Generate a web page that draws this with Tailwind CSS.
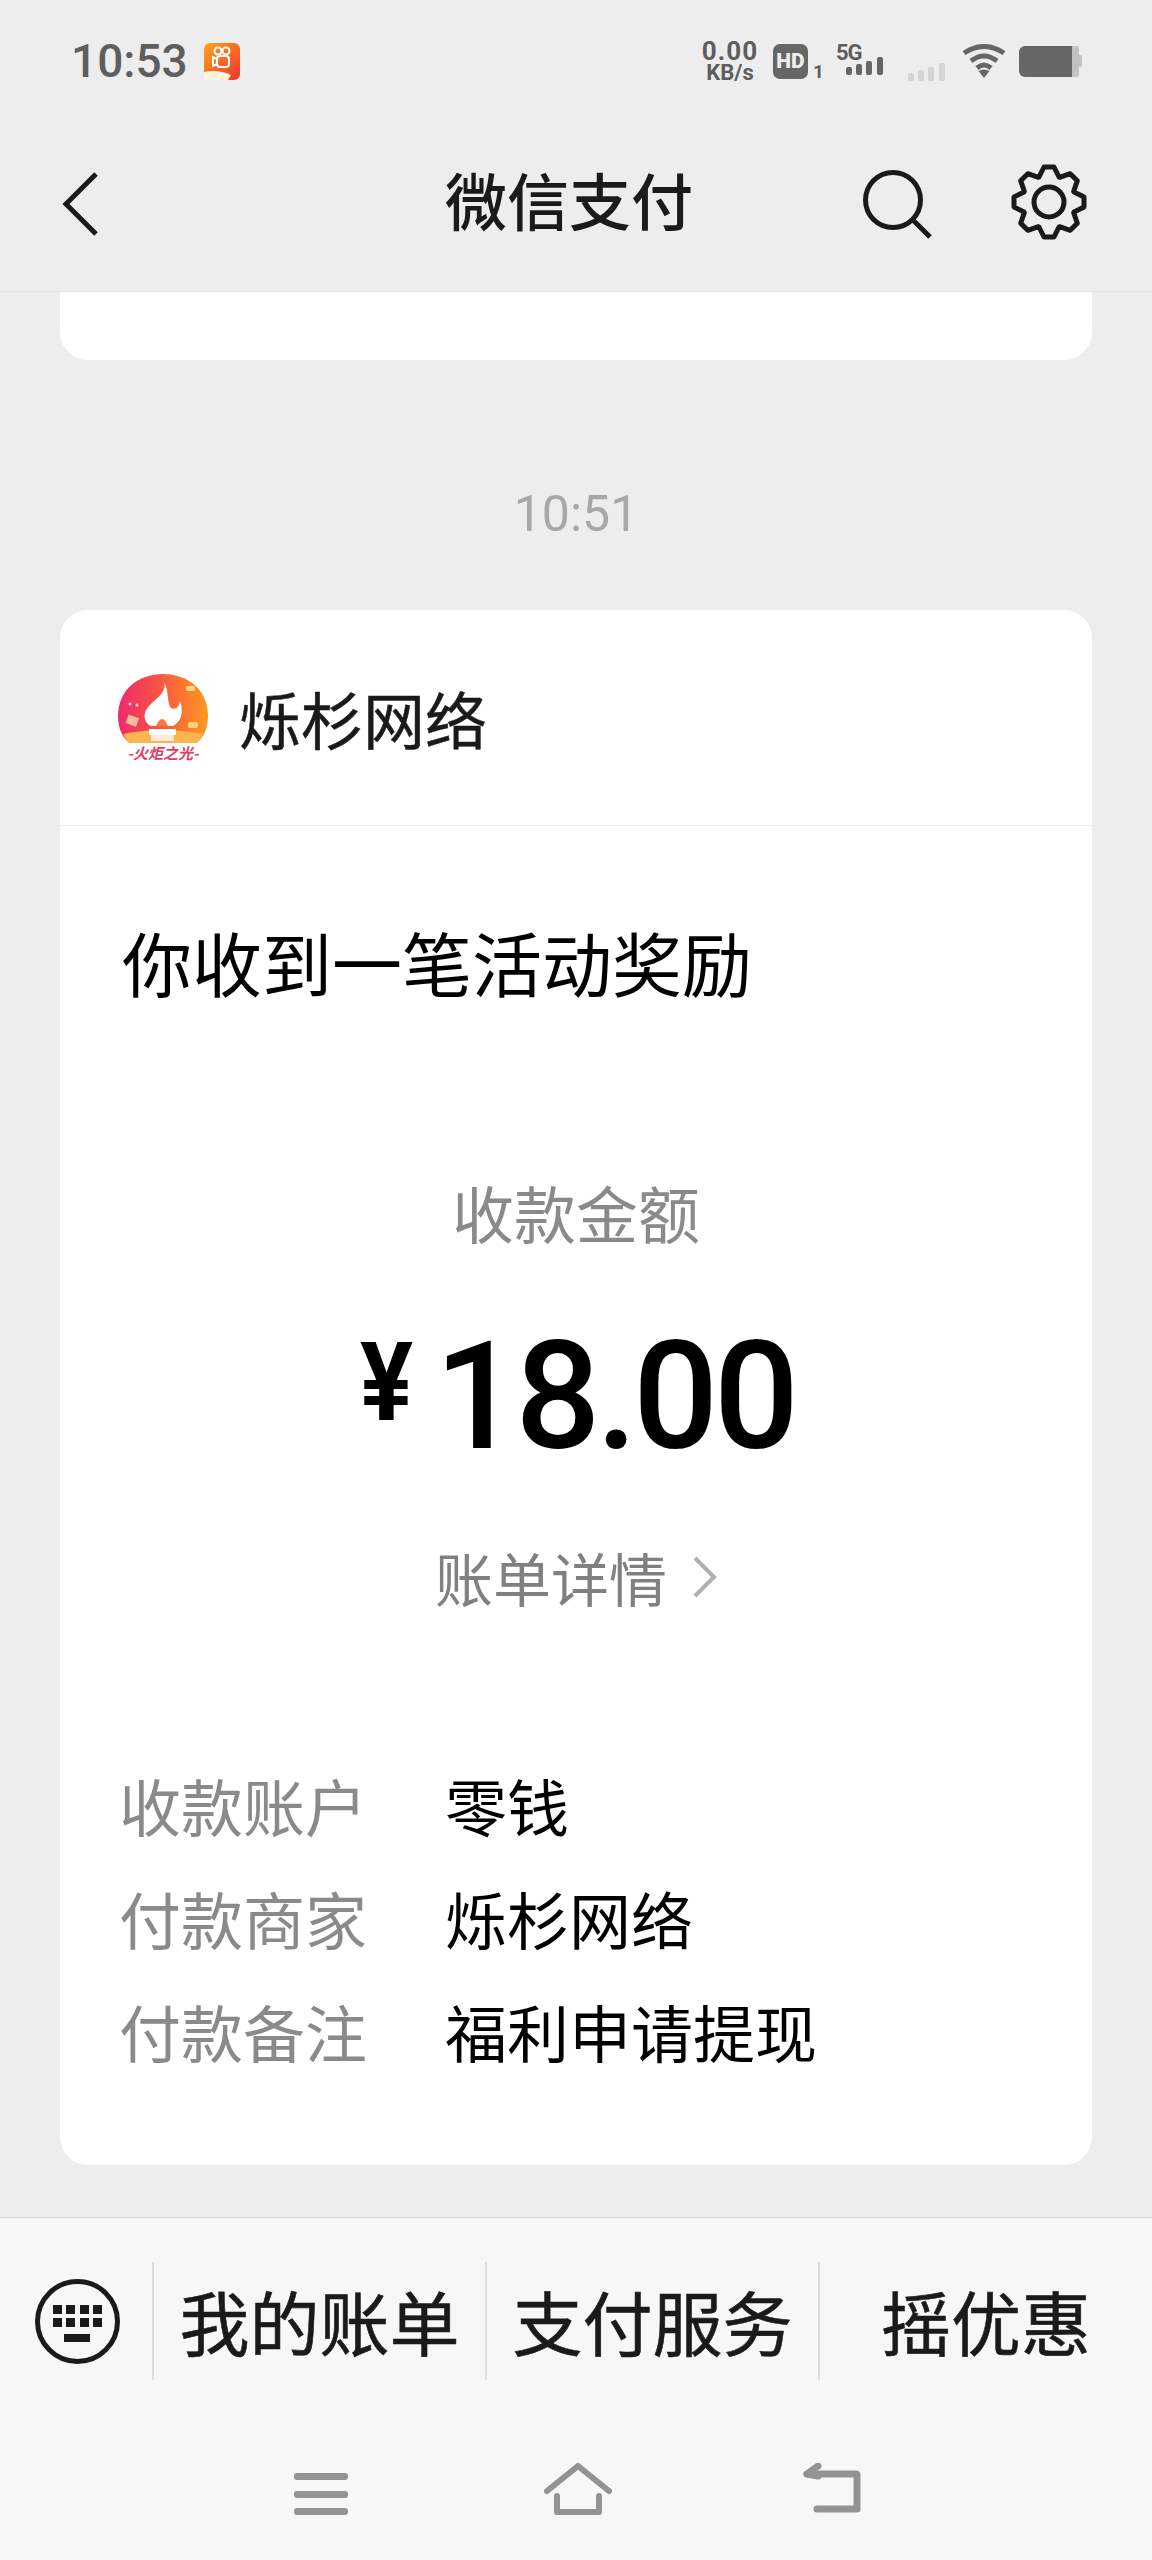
<!DOCTYPE html>
<html lang="zh-CN">
<head>
    <meta charset="UTF-8">
    <meta name="viewport" content="width=device-width, initial-scale=1.0">
    <script src="https://cdn.jsdelivr.net/npm/@tailwindcss/browser@4"></script>
    <title>微信支付</title>
</head>
<body class="bg-[#ededed] font-['Noto_Sans_CJK_SC',sans-serif] text-[#1a1a1a]">
<div class="w-[1152px] h-[2560px] flex flex-col overflow-hidden">

    <!-- status bar + nav -->
    <header class="h-[292px] shrink-0 border-b border-[#e6e6e6]">
        <div class="h-[122px] flex items-center pl-[71px] pr-[70px] text-[#5e5e5e] font-['Roboto',sans-serif]">
            <span class="text-[46px] leading-none font-medium">10:53</span>
            <svg class="ml-[16px]" width="36" height="37" viewBox="0 0 36 37">
                <defs><linearGradient id="ks" x1="0" y1="0" x2="1" y2="1"><stop offset="0" stop-color="#ffa51f"/><stop offset="1" stop-color="#f0322b"/></linearGradient></defs>
                <rect width="36" height="37" rx="6" fill="url(#ks)"/>
                <path d="M0 29 Q14 26 27 32 L24 37 L5 37 Q0 37 0 33Z" fill="#fff3dc"/>
                <g fill="none" stroke="#fff" stroke-width="2">
                    <circle cx="14" cy="8" r="3.500"/><circle cx="22" cy="8" r="3.500"/>
                    <rect x="13" y="13" width="12" height="11" rx="3"/><path d="M13 16 L9 14 V23 L13 21"/>
                </g>
            </svg>
            <div class="ml-auto flex flex-col items-center font-bold w-[58px]">
                <span class="text-[26px] leading-[24px] tracking-[1px]">0.00</span>
                <span class="text-[22px] leading-[20px]">KB/s</span>
            </div>
            <div class="ml-[14px] w-[35px] h-[35px] rounded-[7px] bg-[#666] text-[#ededed] text-[21px] leading-[35px] text-center font-black">HD</div>
            <span class="ml-[5px] mt-[20px] w-[8px] text-[19px] leading-none font-bold">1</span>
            <div class="ml-[15px] w-[48px] h-[36px] relative">
                <span class="absolute left-0 top-0 text-[22px] leading-[20px] font-bold tracking-[-1px]">5G</span>
                <svg class="absolute left-[10px] top-[14px]" width="38" height="18" viewBox="0 0 38 18" fill="#666"><rect x="0" y="10" width="6" height="8" rx="2"/><rect x="10" y="7" width="6" height="11" rx="2"/><rect x="20" y="4" width="6" height="14" rx="2"/><rect x="31" y="0" width="6" height="18" rx="2"/></svg>
            </div>
            <svg class="ml-[24px] mt-[22px]" width="38" height="18" viewBox="0 0 38 18" fill="#d4d4d4"><rect x="0" y="10" width="6" height="8" rx="2"/><rect x="10" y="7" width="6" height="11" rx="2"/><rect x="20" y="4" width="6" height="14" rx="2"/><rect x="31" y="0" width="6" height="18" rx="2"/></svg>
            <svg class="ml-[16px]" width="44" height="34" viewBox="0 0 43 34" fill="none" stroke="#666" stroke-width="5">
                <path d="M1.500 9 Q21.500 -4 41.500 9"/><path d="M8.500 17 Q21.500 7 34.500 17"/><path d="M14.500 24 Q21.500 18 28.500 24"/>
                <path d="M16 27 L21.500 34 L27 27 Q21.500 24 16 27Z" fill="#666" stroke="none"/>
            </svg>
            <div class="ml-[13px] flex items-center">
                <div class="w-[53px] h-[31px] bg-[#666] rounded-l-[6px]"></div>
                <div class="w-[7px] h-[31px] bg-[#c2c2c2] rounded-r-[3px]"></div>
                <div class="w-[3px] h-[12px] bg-[#c2c2c2] rounded-r-[2px]"></div>
            </div>
        </div>
        <div class="h-[169px] flex items-center pl-[60px] pr-[64px]">
            <svg width="40" height="66" viewBox="0 0 40 66" fill="none" stroke="#1a1a1a" stroke-width="5" class="mt-[-6px]"><path d="M36 3 L6 33 L36 63"/></svg>
            <h1 class="ml-[345px] mt-[-16px] text-[62px] leading-[80px] font-medium">微信支付</h1>
            <svg class="ml-auto mt-[-4px]" width="70" height="70" viewBox="0 0 70 70" fill="none" stroke="#1a1a1a" stroke-width="5"><circle cx="30" cy="30" r="27.500"/><path d="M50 50 L67 67"/></svg>
            <svg class="ml-[77px] mt-[-10px]" width="78" height="78" viewBox="-39 -39 78 78" fill="none" stroke="#1a1a1a" stroke-width="5" stroke-linejoin="round">
                <path d="M-10 -25 L-5 -35 L5 -35 L10 -25 L10.600 -24.700 L21.200 -28.300 L28.300 -21.200 L24.700 -10.600 L25 -10 L35 -5 L35 5 L25 10 L24.700 10.600 L28.300 21.200 L21.200 28.300 L10.600 24.700 L10 25 L5 35 L-5 35 L-10 25 L-10.600 24.700 L-21.200 28.300 L-28.300 21.200 L-24.700 10.600 L-25 10 L-35 5 L-35 -5 L-25 -10 L-24.700 -10.600 L-28.300 -21.200 L-21.200 -28.300 L-10.600 -24.700Z"/>
                <circle r="15"/>
            </svg>
        </div>
    </header>

    <main class="flex-1 px-[60px]">
        <div class="h-[68px] bg-white rounded-b-[28px]"></div>
        <p class="mt-[114px] text-center text-[50px] leading-[80px] text-[#a8a8a8] font-['Roboto',sans-serif]">10:51</p>
        <section class="mt-[56px] h-[1555px] bg-white rounded-[28px]">
            <div class="h-[216px] border-b border-[#f0f0f0] flex items-center pl-[58px]">
                <svg width="92" height="90" viewBox="0 0 92 90" class="mt-[2px]">
                    <defs><linearGradient id="dome" x1="0" y1="0" x2="1" y2="0"><stop offset="0" stop-color="#ee2a6b"/><stop offset="0.5" stop-color="#f95a3e"/><stop offset="1" stop-color="#fb9a1e"/></linearGradient></defs>
                    <path d="M0 42 C0 16 20 0 45 0 C70 0 90 16 90 42 C90 56 84 66 78 69 L12 69 C6 66 0 56 0 42Z" fill="url(#dome)"/>
                    <path d="M5 60 Q45 52 85 60 Q82 67 78 69 L12 69 Q8 67 5 60Z" fill="#fcb451"/>
                    <path d="M46 8 C49 18 39 24 33 30 C24 38 25 48 33 52 L55 52 C63 48 66 38 62 27 C61 34 57 36 53 34 C49 30 51 16 46 8Z" fill="#fff"/>
                    <path d="M38 52 Q44 38 50 52Z" fill="#f97a37"/>
                    <rect x="31" y="55" width="27" height="6" fill="#fff"/><rect x="33" y="61" width="23" height="6" fill="#ffe9dc"/>
                    <rect x="9" y="42" width="11" height="9" fill="#f9b8a0" transform="rotate(20 14 46)"/>
                    <rect x="70" y="48" width="10" height="6" rx="2" fill="#fdd27a"/>
                    <rect x="68" y="12" width="9" height="5" rx="1" fill="#fdd27a"/>
                    <circle cx="12" cy="30" r="1.500" fill="#ffd2dc"/><circle cx="19" cy="31" r="1.500" fill="#ffd2dc"/>
                    <text x="45" y="85" text-anchor="middle" font-size="15" font-style="italic" font-weight="700" fill="#e13a66" font-family="Noto Sans CJK SC">-火炬之光-</text>
                </svg>
                <span class="ml-[29px] text-[62px] leading-[80px] [-webkit-text-stroke:0.5px_#1a1a1a]">烁杉网络</span>
            </div>
            <div class="pt-[96px] px-[62px]">
                <h2 class="text-[70px] leading-[80px] text-black">你收到一笔活动奖励</h2>
                <p class="mt-[170px] text-center text-[62px] leading-[80px] text-[#8a8a8a]">收款金额</p>
                <div class="mt-[67px] h-[150px] flex justify-center items-start font-['Roboto',sans-serif] text-black">
                    <span class="text-[110px] leading-[105px] font-bold inline-block scale-x-[0.9] mt-[11px]">¥</span>
                    <span class="ml-[18px] mt-[3px] text-[150px] leading-[150px] font-medium tracking-[-4.500px]">18.00</span>
                </div>
                <div class="mt-[68px] flex justify-center items-center text-[#808080]">
                    <span class="text-[58px] leading-[80px]">账单详情</span>
                    <svg class="ml-[26px]" width="24" height="42" viewBox="0 0 24 42" fill="none" stroke="#b0b0b0" stroke-width="4"><path d="M2 2 L21 21 L2 40"/></svg>
                </div>
                <dl class="mt-[148px] ml-[-3px] flex flex-col gap-[33px] text-[62px] leading-[80px]">
                    <div class="flex"><dt class="w-[326px] text-[#8a8a8a]">收款账户</dt><dd class="text-black">零钱</dd></div>
                    <div class="flex"><dt class="w-[326px] text-[#8a8a8a]">付款商家</dt><dd class="text-black">烁杉网络</dd></div>
                    <div class="flex"><dt class="w-[326px] text-[#8a8a8a]">付款备注</dt><dd class="text-black">福利申请提现</dd></div>
                </dl>
            </div>
        </section>
    </main>

    <!-- bottom menu + nav keys -->
    <footer class="h-[343px] shrink-0 bg-[#f7f7f7] border-t border-[#d8d8d8]">
        <div class="h-[118px] mt-[44px] flex items-center text-[70px] leading-[80px] [-webkit-text-stroke:0.6px_#1a1a1a]">
            <div class="w-[152px] h-full flex items-center pl-[35px]">
                <svg width="85" height="85" viewBox="0 0 85 85" fill="#1a1a1a">
                    <circle cx="42.500" cy="42.500" r="40" fill="none" stroke="#1a1a1a" stroke-width="5"/>
                    <rect x="18" y="26" width="9" height="9"/><rect x="31" y="26" width="9" height="9"/><rect x="45" y="26" width="9" height="9"/><rect x="58" y="26" width="9" height="9"/>
                    <rect x="18" y="39" width="9" height="9"/><rect x="31" y="39" width="9" height="9"/><rect x="45" y="39" width="9" height="9"/><rect x="58" y="39" width="9" height="9"/>
                    <rect x="29" y="55" width="26" height="8"/>
                </svg>
            </div>
            <div class="w-[333px] h-full border-l-2 border-[#dedede] flex items-center justify-center">我的账单</div>
            <div class="w-[333px] h-full border-l-2 border-[#dedede] flex items-center justify-center">支付服务</div>
            <div class="w-[334px] h-full border-l-2 border-[#dedede] flex items-center justify-center">摇优惠</div>
        </div>
        <div class="mt-[83px] flex items-start">
            <svg class="ml-[294px] mt-[10px]" width="54" height="42" viewBox="0 0 54 42" fill="#939393"><rect width="54" height="7" rx="3"/><rect y="18" width="54" height="7" rx="3"/><rect y="35" width="54" height="7" rx="3"/></svg>
            <svg class="ml-[196px]" width="68" height="52" viewBox="0 0 68 52" fill="none" stroke="#939393" stroke-width="6" stroke-linecap="round" stroke-linejoin="round"><path d="M3 28 L34 3 L65 28"/><path d="M13 33 V49 H55 V33"/></svg>
            <svg class="ml-[191px]" width="58" height="50" viewBox="0 0 58 50" fill="none" stroke="#939393" stroke-width="7" stroke-linecap="round" stroke-linejoin="round"><path d="M4 11 L53 11 Q54 11 54 12 V46 H14"/><path d="M15 3 L4 11 L15 13"/></svg>
        </div>
    </footer>
</div>
</body>
</html>
